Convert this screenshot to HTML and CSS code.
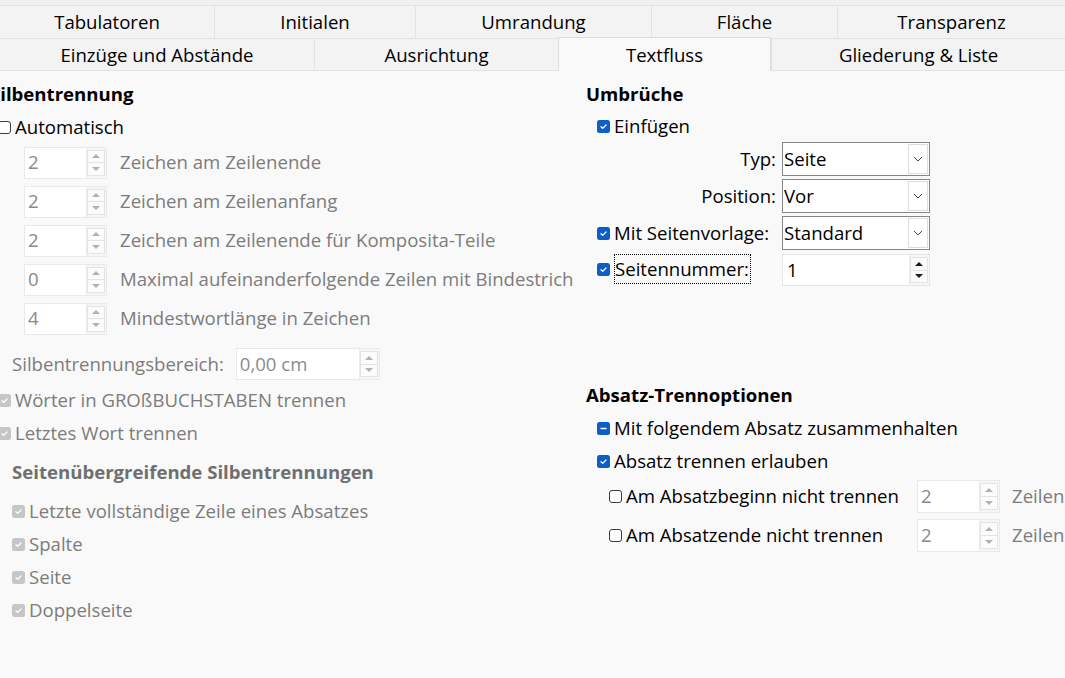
FILE: index.html
```html
<!DOCTYPE html>
<html lang="de">
<head>
<meta charset="utf-8">
<title>Absatz – Textfluss</title>
<link rel="stylesheet" href="styles.css">
</head>
<body>
<div class="tabs">
  <div class="tabrow r1">
    <div class="tab first">Tabulatoren</div>
    <div class="tab">Initialen</div>
    <div class="tab">Umrandung</div>
    <div class="tab">Fläche</div>
    <div class="tab">Transparenz</div>
  </div>
  <div class="tabrow r2">
    <div class="tab first">Einzüge und Abstände</div>
    <div class="tab">Ausrichtung</div>
    <div class="tab sel">Textfluss</div>
    <div class="tab">Gliederung &amp; Liste</div>
  </div>
</div>

<div class="content">
  <div class="col left">
    <div class="row h">Silbentrennung</div>
    <div class="row chk ind0 auto"><span class="cb off"><svg viewBox="0 0 13 13"><rect x="0.5" y="0.5" width="12" height="12" rx="2.5"/></svg></span>Automatisch</div>

    <div class="spinrow">
      <div class="spin dis small"><span class="val">2</span><span class="btns"><i class="up"></i><i class="dn"></i></span></div>
      <span class="lbl dis">Zeichen am Zeilenende</span>
    </div>
    <div class="spinrow">
      <div class="spin dis small"><span class="val">2</span><span class="btns"><i class="up"></i><i class="dn"></i></span></div>
      <span class="lbl dis">Zeichen am Zeilenanfang</span>
    </div>
    <div class="spinrow">
      <div class="spin dis small"><span class="val">2</span><span class="btns"><i class="up"></i><i class="dn"></i></span></div>
      <span class="lbl dis">Zeichen am Zeilenende für Komposita-Teile</span>
    </div>
    <div class="spinrow">
      <div class="spin dis small"><span class="val">0</span><span class="btns"><i class="up"></i><i class="dn"></i></span></div>
      <span class="lbl dis">Maximal aufeinanderfolgende Zeilen mit Bindestrich</span>
    </div>
    <div class="spinrow">
      <div class="spin dis small"><span class="val">4</span><span class="btns"><i class="up"></i><i class="dn"></i></span></div>
      <span class="lbl dis">Mindestwortlänge in Zeichen</span>
    </div>

    <div class="rangerow">
      <span class="lbl dis">Silbentrennungsbereich:</span>
      <div class="spin dis wide"><span class="val">0,00 cm</span><span class="btns"><i class="up"></i><i class="dn"></i></span></div>
    </div>

    <div class="row chk ind0 dis mt3"><span class="cb dimmed"><svg viewBox="0 0 13 13"><rect x="0" y="0" width="13" height="13" rx="2.5"/><path d="M4 6.8 L5.7 8.4 L9 5"/></svg></span>Wörter in GROßBUCHSTABEN trennen</div>
    <div class="row chk ind0 dis"><span class="cb dimmed"><svg viewBox="0 0 13 13"><rect x="0" y="0" width="13" height="13" rx="2.5"/><path d="M4 6.8 L5.7 8.4 L9 5"/></svg></span>Letztes Wort trennen</div>

    <div class="row h sub ind1">Seitenübergreifende Silbentrennungen</div>

    <div class="subchecks">
      <div class="row chk ind1 dis"><span class="cb dimmed"><svg viewBox="0 0 13 13"><rect x="0" y="0" width="13" height="13" rx="2.5"/><path d="M4 6.8 L5.7 8.4 L9 5"/></svg></span>Letzte vollständige Zeile eines Absatzes</div>
      <div class="row chk ind1 dis"><span class="cb dimmed"><svg viewBox="0 0 13 13"><rect x="0" y="0" width="13" height="13" rx="2.5"/><path d="M4 6.8 L5.7 8.4 L9 5"/></svg></span>Spalte</div>
      <div class="row chk ind1 dis"><span class="cb dimmed"><svg viewBox="0 0 13 13"><rect x="0" y="0" width="13" height="13" rx="2.5"/><path d="M4 6.8 L5.7 8.4 L9 5"/></svg></span>Seite</div>
      <div class="row chk ind1 dis"><span class="cb dimmed"><svg viewBox="0 0 13 13"><rect x="0" y="0" width="13" height="13" rx="2.5"/><path d="M4 6.8 L5.7 8.4 L9 5"/></svg></span>Doppelseite</div>
    </div>
  </div>

  <div class="col right">
    <div class="row h">Umbrüche</div>
    <div class="row chk indr short"><span class="cb on"><svg viewBox="0 0 13 13"><rect x="0" y="0" width="13" height="13" rx="2.5"/><path d="M4 6.8 L5.7 8.4 L9 5"/></svg></span>Einfügen</div>

    <div class="form">
      <div class="flabel">Typ:</div>
      <div class="dd"><span class="v">Seite</span><span class="arr"><svg viewBox="0 0 10 6"><path d="M1 1 L5 5 L9 1"/></svg></span></div>

      <div class="flabel">Position:</div>
      <div class="dd"><span class="v">Vor</span><span class="arr"><svg viewBox="0 0 10 6"><path d="M1 1 L5 5 L9 1"/></svg></span></div>

      <div class="flabel left"><span class="cb on"><svg viewBox="0 0 13 13"><rect x="0" y="0" width="13" height="13" rx="2.5"/><path d="M4 6.8 L5.7 8.4 L9 5"/></svg></span>Mit Seitenvorlage:</div>
      <div class="dd"><span class="v">Standard</span><span class="arr"><svg viewBox="0 0 10 6"><path d="M1 1 L5 5 L9 1"/></svg></span></div>

      <div class="flabel left"><span class="cb on"><svg viewBox="0 0 13 13"><rect x="0" y="0" width="13" height="13" rx="2.5"/><path d="M4 6.8 L5.7 8.4 L9 5"/></svg></span><span class="focus">Seitennummer:</span></div>
      <div class="spin en"><span class="val">1</span><span class="btns"><i class="up"></i><i class="dn"></i></span></div>
    </div>

    <div class="abs">
      <div class="row h">Absatz-Trennoptionen</div>
      <div class="row chk indr"><span class="cb on"><svg viewBox="0 0 13 13"><rect x="0" y="0" width="13" height="13" rx="2.5"/><path d="M4 6.5 L9 6.5"/></svg></span>Mit folgendem Absatz zusammenhalten</div>
      <div class="row chk indr"><span class="cb on"><svg viewBox="0 0 13 13"><rect x="0" y="0" width="13" height="13" rx="2.5"/><path d="M4 6.8 L5.7 8.4 L9 5"/></svg></span>Absatz trennen erlauben</div>

      <div class="pr first">
        <div class="chk"><span class="cb off"><svg viewBox="0 0 13 13"><rect x="0.5" y="0.5" width="12" height="12" rx="2.5"/></svg></span>Am Absatzbeginn nicht trennen</div>
        <div class="spin dis small"><span class="val">2</span><span class="btns"><i class="up"></i><i class="dn"></i></span></div>
        <span class="lbl dis">Zeilen</span>
      </div>
      <div class="pr">
        <div class="chk"><span class="cb off"><svg viewBox="0 0 13 13"><rect x="0.5" y="0.5" width="12" height="12" rx="2.5"/></svg></span>Am Absatzende nicht trennen</div>
        <div class="spin dis small"><span class="val">2</span><span class="btns"><i class="up"></i><i class="dn"></i></span></div>
        <span class="lbl dis">Zeilen</span>
      </div>
    </div>
  </div>
</div>
</body>
</html>
```

FILE: styles.css
```css
* { box-sizing: border-box; }

html, body {
  margin: 0;
  padding: 0;
}

body {
  width: 1065px;
  height: 678px;
  overflow: hidden;
  background: #f9f9f9;
  color: #000;
  font-family: "Open Sans", "Noto Sans", "DejaVu Sans", sans-serif;
  font-size: 18.6px;
  line-height: 1.2;
}

/* ---------- tabs ---------- */
.tabs {
  background: #f0f0f0;
  padding-top: 5px;
}

.tabrow {
  display: grid;
  border-top: 1px solid #e3e3e3;
}

.r1 { grid-template-columns: 214px 201px 236px 186px 228px; }
.r2 {
  grid-template-columns: 314px 244px 213px 294px;
  border-bottom: 1px solid #e3e3e3;
}

.tab {
  background: #f3f3f3;
  border-left: 1px solid #e3e3e3;
  height: 32px;
  padding-top: 1px;
  display: flex;
  align-items: center;
  justify-content: center;
  white-space: nowrap;
}

.r2 .tab { height: 31px; }
.tab.first { border-left: none; }

.tab.sel {
  background: #f9f9f9;
  border: 1px solid #dcdcdc;
  border-bottom: none;
  height: 34px;
  margin-top: -2px;
  margin-bottom: -1px;
  padding-top: 2px;
}

/* ---------- content ---------- */
.content {
  display: grid;
  grid-template-columns: 596px 1fr;
  margin-left: -10px;
  padding-top: 7px;
}

.col { display: flex; flex-direction: column; }

.row {
  height: 33px;
  display: flex;
  align-items: center;
  white-space: nowrap;
}

.h { font-weight: bold; }
.h.sub { color: #6f6f6f; margin-top: 6px; }

.chk { display: flex; align-items: center; gap: 4px; white-space: nowrap; }

.ind0 { padding-left: 8px; }
.ind1 { padding-left: 22px; }
.indr { padding-left: 11px; }
.short { height: 31px; }
.auto { height: 32px; }
.mt3 { margin-top: 3px; }

.dis { color: #7c7c7c; }

.subchecks { margin-top: 6px; display: flex; flex-direction: column; }

/* checkboxes */
.cb {
  width: 13px;
  height: 13px;
  flex: none;
  display: block;
}
.cb svg { width: 13px; height: 13px; display: block; }
.cb path { fill: none; stroke: #fff; stroke-width: 1.3; stroke-linecap: round; stroke-linejoin: round; }
.cb.off rect { fill: #fff; stroke: #3c3c3c; stroke-width: 1; }
.cb.on rect { fill: #0c5fc4; }
.cb.dimmed rect { fill: #c6c6c6; }

/* spin rows */
.spinrow {
  height: 39px;
  display: flex;
  align-items: center;
  gap: 13px;
  padding-left: 34px;
  white-space: nowrap;
}

.rangerow {
  height: 34px;
  margin-top: 9px;
  display: flex;
  align-items: center;
  gap: 12px;
  padding-left: 22px;
  white-space: nowrap;
}

.spin {
  display: flex;
  background: #fff;
  border: 1px solid #e9e9e9;
  height: 32px;
  flex: none;
}
.spin.small { width: 83px; }
.spin.wide { width: 144px; }
.spin.en { width: 148px; height: 31px; margin-top: 1px; border-color: #e6e6e6; }

.spin .val {
  flex: 1;
  display: flex;
  align-items: center;
  padding-left: 3px;
  white-space: nowrap;
}
.spin.dis .val { color: #8a8a8a; }
.spin.en .val { padding-left: 4px; }

.btns {
  width: 20px;
  display: flex;
  flex-direction: column;
  padding: 2px 1px 2px 0;
  background: #f6f6f6;
  border-left: 1px solid #ececec;
}
.btns i {
  flex: 1;
  display: flex;
  align-items: center;
  justify-content: center;
  border: 1px solid #e4e4e4;
  background: #fbfbfb;
}
.btns i + i { border-top: none; }
.btns i::after {
  content: "";
  width: 0;
  height: 0;
  border-left: 4px solid transparent;
  border-right: 4px solid transparent;
}
.btns .up::after { border-bottom: 4px solid #b2b2b2; }
.btns .dn::after { border-top: 4px solid #b2b2b2; }
.spin.en .btns .up::after { border-bottom-color: #1a1a1a; }
.spin.en .btns .dn::after { border-top-color: #1a1a1a; }

/* right form */
.form {
  display: grid;
  grid-template-columns: 179px 148px;
  grid-auto-rows: 34px;
  column-gap: 6px;
  row-gap: 3px;
  margin-left: 11px;
}
.form > :nth-last-child(-n+2) { height: 32px; }

.flabel {
  display: flex;
  align-items: center;
  justify-content: flex-end;
  white-space: nowrap;
}
.flabel.left { justify-content: flex-start; gap: 3px; }
.flabel.left .cb { margin-right: 1px; }

.focus {
  border: 1px dotted #000;
  height: 30px;
  display: flex;
  align-items: center;
  padding: 0 1px 0 0;
}

.dd {
  display: flex;
  background: #fff;
  border: 1px solid #858585;
  height: 34px;
}
.dd .v {
  flex: 1;
  display: flex;
  align-items: center;
  padding-left: 1px;
  white-space: nowrap;
}
.dd .arr {
  width: 20px;
  margin: 1px 1px 1px 0;
  border: 1px solid #dddddd;
  display: flex;
  align-items: center;
  justify-content: center;
}
.dd .arr svg { width: 10px; height: 6px; }
.dd .arr path { fill: none; stroke: #444; stroke-width: 1; }

/* absatz options */
.abs { margin-top: 92px; display: flex; flex-direction: column; }

.pr {
  display: grid;
  grid-template-columns: 296px 83px auto;
  column-gap: 12px;
  align-items: center;
  height: 33px;
  margin-top: 6px;
  padding-left: 23px;
  white-space: nowrap;
}
.pr.first { margin-top: 2px; }
.pr .spin { height: 33px; }
.pr .chk { gap: 4px; }
```
